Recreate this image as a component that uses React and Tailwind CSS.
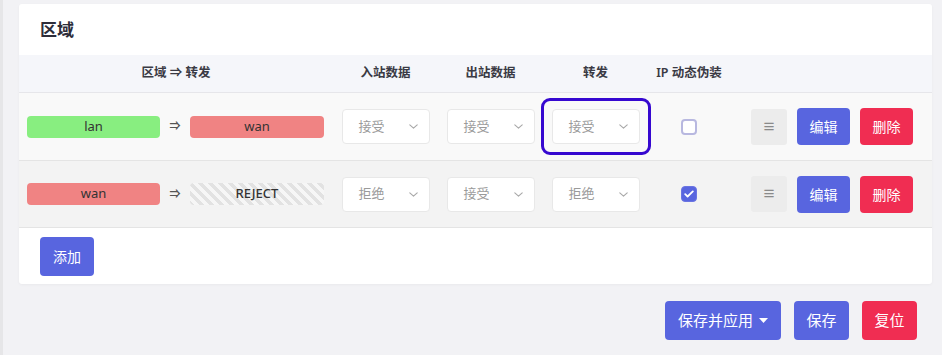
import React from "react";

const font = { fontFamily: '"Noto Sans", "Noto Sans CJK SC", sans-serif' };

function Chevron() {
  return (
    <svg width="9" height="5" viewBox="0 0 9 5" fill="none" className="shrink-0">
      <path d="M0.8 0.8l3.7 3.4 3.7-3.4" stroke="#a8a8a8" strokeWidth="1.1" strokeLinecap="round" strokeLinejoin="round" />
    </svg>
  );
}

function Select({ value, focused }) {
  return (
    <div className="w-[105px] flex justify-center">
      <div className="relative">
        {focused && (
          <div className="absolute -inset-[11px] rounded-[9px] border-[3px] border-[#3608d0]" />
        )}
        <div className="w-[88px] h-[35px] bg-white border border-[#e8e8e8] rounded-[4px] flex items-center justify-between pl-[16px] pr-[11px] text-[13px] text-[#9a9a9a]">
          <span>{value}</span>
          <Chevron />
        </div>
      </div>
    </div>
  );
}

function Checkbox({ checked }) {
  return (
    <div className="w-[82px] flex justify-center">
      {checked ? (
        <div className="w-[16px] h-[16px] rounded-[4px] bg-[#5865df] border border-[#6a74e2] flex items-center justify-center">
          <svg width="10" height="8" viewBox="0 0 10 8" fill="none">
            <path d="M1.2 4.2l2.4 2.3L8.8 1.4" stroke="white" strokeWidth="1.8" strokeLinecap="round" strokeLinejoin="round" />
          </svg>
        </div>
      ) : (
        <div className="w-[16px] h-[16px] rounded-[4px] bg-white border-2 border-[#b8b8e0]" />
      )}
    </div>
  );
}

function Actions() {
  return (
    <div className="flex-1 flex items-center gap-[10px] pl-[21px]">
      <div className="w-[36px] h-[36px] bg-[#ececec] rounded-[3px] flex items-center justify-center text-[#8a8a8a] text-[13px] font-bold">≡</div>
      <button className="w-[53px] h-[37px] bg-[#5865df] rounded-[4px] text-white text-[14px]">编辑</button>
      <button className="w-[53px] h-[37px] bg-[#f02d52] rounded-[4px] text-white text-[14px]">删除</button>
    </div>
  );
}

function Badge({ children, cls }) {
  return (
    <div className={"h-[22px] rounded-[4px] flex items-center justify-center text-[13px] text-[#333] " + cls}>
      {children}
    </div>
  );
}

function Row({ from, fromCls, to, toCls, inb, outb, fwd, focused, checked, bg }) {
  return (
    <div className={"flex items-center border-b border-[#e4e4e4] " + bg}>
      <div className="w-[314px] flex items-center pl-[8px]">
        <Badge cls={"w-[133px] " + fromCls}>{from}</Badge>
        <div className="w-[30px] text-center text-[11px] font-bold text-[#555]">⇒</div>
        <Badge cls={"w-[134px] " + toCls}>{to}</Badge>
      </div>
      <Select value={inb} />
      <Select value={outb} />
      <Select value={fwd} focused={focused} />
      <Checkbox checked={checked} />
      <Actions />
    </div>
  );
}

export default function App() {
  return (
    <div style={font} className="w-[942px] h-[355px] bg-[#f2f2f5] flex overflow-hidden">
      <div className="w-[3px] bg-[#e6e6e8] shrink-0" />
      <div className="flex-1 flex flex-col pl-[16px] pr-[10px] pt-[4px]">
        <div className="bg-white rounded-[3px] shadow-[0_1px_3px_rgba(0,0,0,0.04)]">
          <div className="h-[51px] flex items-center pl-[21px] text-[17px] font-bold text-[#2d2d3a]">区域</div>
          <div className="h-[38px] flex items-center bg-[#f5f6fa] border-b border-[#e6e6ea] text-[12.5px] font-semibold text-[#3a3a44]">
            <div className="w-[314px] text-center">区域 ⇒ 转发</div>
            <div className="w-[105px] text-center">入站数据</div>
            <div className="w-[105px] text-center">出站数据</div>
            <div className="w-[105px] text-center">转发</div>
            <div className="w-[82px] text-center">IP 动态伪装</div>
            <div className="flex-1" />
          </div>
          <Row
            bg="bg-[#f9f9f9] h-[68px]"
            from="lan"
            fromCls="bg-[#88ee80]"
            to="wan"
            toCls="bg-[#f08383]"
            inb="接受"
            outb="接受"
            fwd="接受"
            focused
            checked={false}
          />
          <Row
            bg="bg-[#f3f3f3] h-[67px]"
            from="wan"
            fromCls="bg-[#f08383]"
            to="REJECT"
            toCls="font-medium bg-[repeating-linear-gradient(45deg,#e2e2e2_0px,#e2e2e2_3.5px,#f6f6f6_3.5px,#f6f6f6_7px)]"
            inb="拒绝"
            outb="接受"
            fwd="拒绝"
            checked
          />
          <div className="h-[56px] flex items-center pl-[21px]">
            <button className="w-[54px] h-[39px] bg-[#5865df] rounded-[4px] text-white text-[14px]">添加</button>
          </div>
        </div>
        <div className="flex justify-end gap-[13px] mt-[17px] pr-[15px]">
          <button className="w-[116px] h-[39px] bg-[#5865df] rounded-[4px] text-white text-[15px] flex items-center justify-center gap-[6px]">
            保存并应用
            <svg width="9" height="5" viewBox="0 0 9 5"><path d="M0 0h9L4.5 5z" fill="white" /></svg>
          </button>
          <button className="w-[55px] h-[39px] bg-[#5865df] rounded-[4px] text-white text-[15px]">保存</button>
          <button className="w-[55px] h-[39px] bg-[#f02d52] rounded-[4px] text-white text-[15px]">复位</button>
        </div>
      </div>
    </div>
  );
}
